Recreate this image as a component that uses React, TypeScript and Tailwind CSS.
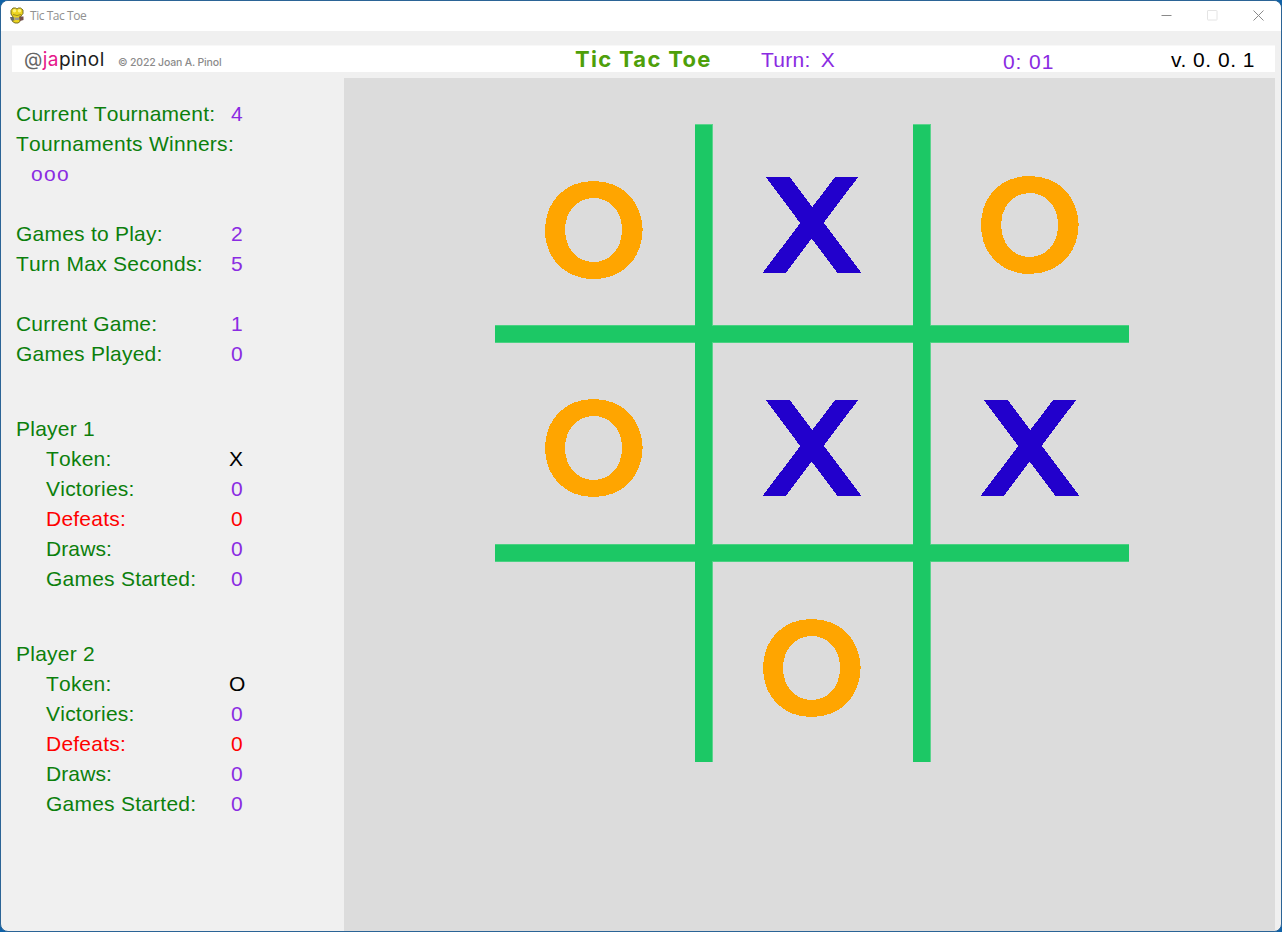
import React from "react";

type Tone = "green" | "red";
type Stat = { label: string; value?: string; tone?: Tone; valueClass?: string; labelClass?: string };

const PURPLE = "text-[#8a2be2]";

function PythonIcon() {
  return (
    <svg width="16" height="17" viewBox="0 0 16 17">
      <path d="M2 3.500 4 1h2.500l1.500 1 1.500-1h2L14 3v3.500L12 9l-1 1.500v4L9 16H6l-2.500-1.500.500-4.500L2 7z" fill="#ecd41f" stroke="#6b6218" strokeWidth="0.900" />
      <circle cx="5.500" cy="3.800" r="1.700" fill="#fff27a" />
      <circle cx="10.500" cy="3.800" r="1.700" fill="#fff27a" />
      <path d="M4 7.500q4 2 8 0" fill="none" stroke="#8a7c18" strokeWidth="0.800" />
      <path d="M1 10h3.500l1 3.500H2z" fill="#666a6e" />
      <path d="M5 10.500h5v2.500H6z" fill="#9b9b90" />
      <path d="M10 9.500h4.500v3.500L11 14z" fill="#75504c" />
    </svg>
  );
}

function WindowBar() {
  return (
    <div className="flex h-[30px] shrink-0 items-center bg-white pb-px pl-2">
      <PythonIcon />
      <span className="ml-[5px] pt-px font-['Open_Sans','Noto_Sans',sans-serif] text-[12px] leading-none tracking-[-0.450px] text-[#919191]">Tic Tac Toe</span>
      <div className="ml-auto flex h-full items-center gap-[35px] pr-[17px]">
        <svg width="11" height="11" viewBox="0 0 11 11"><path d="M.5 5.500h10" stroke="#8a8a8a" /></svg>
        <svg width="11" height="11" viewBox="0 0 11 11"><rect x=".5" y=".5" width="9.500" height="9.500" rx=".5" fill="none" stroke="#e4e4e4" /></svg>
        <svg width="11" height="11" viewBox="0 0 11 11"><path d="m.5.5 10 10m0-10-10 10" stroke="#8a8a8a" /></svg>
      </div>
    </div>
  );
}

function Header() {
  return (
    <header className="ml-[11px] mr-[6px] mt-[14px] flex h-[27px] shrink-0 items-center border-t border-[#f8f8f8] bg-white text-[21px] leading-[27px]">
      <div className="w-[94px] pl-[12px] pt-px font-['Inter',sans-serif] text-[19px] tracking-[0.450px] text-[#1c1c1c]">
        <span className="text-[#666]">@</span><span className="text-[#e6168a]">ja</span>pinol
      </div>
      <div className="w-[469px] pl-[12px] pt-[6px] font-['Inter',sans-serif] text-[10.500px] font-medium tracking-[-0.180px] text-[#8b8b8b]">© 2022 Joan A. Pinol</div>
      <h1 className="w-[186px] whitespace-nowrap font-['Inter',sans-serif] text-[22px] font-bold tracking-[1.300px] text-[#4e9f0a]">Tic Tac Toe</h1>
      <div className={`w-[242px] whitespace-pre tracking-[0.300px] ${PURPLE}`}>Turn:<span className="ml-[10px]">X</span></div>
      <div className={`w-[168px] pt-[5px] tracking-[0.900px] ${PURPLE}`}>0: 01</div>
      <div className="whitespace-nowrap tracking-[0.500px] text-black">v. 0. 0. 1</div>
    </header>
  );
}

function StatRow({ label, value, tone = "green", valueClass = PURPLE, labelClass = "" }: Stat) {
  return (
    <div className="flex h-[30px] items-center">
      <span className={`w-[215px] whitespace-nowrap ${tone === "red" ? "text-[#ff0000]" : "text-[#0c7f0c]"} ${labelClass}`}>{label}</span>
      <span className={valueClass}>{value}</span>
    </div>
  );
}

function Player({ name, token }: { name: string; token: string }) {
  return (
    <section className="mt-[45px]">
      <StatRow label={name} />
      <StatRow label="Token:" value={token} valueClass="-ml-[2px] text-black" labelClass="pl-[30px]" />
      <StatRow label="Victories:" value="0" labelClass="pl-[30px]" />
      <StatRow label="Defeats:" value="0" tone="red" valueClass="text-[#ff0000]" labelClass="pl-[30px]" />
      <StatRow label="Draws:" value="0" labelClass="pl-[30px] tracking-[0.100px]" />
      <StatRow label="Games Started:" value="0" labelClass="pl-[30px]" />
    </section>
  );
}

function Sidebar() {
  return (
    <aside className="w-[343px] shrink-0 pl-[15px] pt-[21px] text-[21px] leading-[30px] tracking-[0.230px] [font-kerning:none]">
      <StatRow label="Current Tournament:" value="4" />
      <StatRow label="Tournaments Winners:" labelClass="tracking-[0.280px]" />
      <div className={`h-[30px] pl-[15px] tracking-[1.300px] ${PURPLE}`}>ooo</div>
      <div className="mt-[30px]">
        <StatRow label="Games to Play:" value="2" />
        <StatRow label="Turn Max Seconds:" value="5" labelClass="tracking-[0.280px]" />
      </div>
      <div className="mt-[30px]">
        <StatRow label="Current Game:" value="1" labelClass="tracking-[0.180px]" />
        <StatRow label="Games Played:" value="0" />
      </div>
      <Player name="Player 1" token="X" />
      <Player name="Player 2" token="O" />
    </aside>
  );
}

function Cross() {
  return (
    <svg width="98" height="96" viewBox="0 0 98 96" shapeRendering="crispEdges" role="img" aria-label="X">
      <g stroke="#2200cc">
        <line x1="7.600" y1="-9.600" x2="93.600" y2="105.600" strokeWidth="19.200" />
        <line x1="90.850" y1="-9.600" x2="3.850" y2="105.600" strokeWidth="18.500" />
      </g>
    </svg>
  );
}

function Nought() {
  return (
    <svg width="98" height="98" viewBox="0 0 98 98" shapeRendering="crispEdges" role="img" aria-label="O">
      <path
        fill="#ffa500"
        fillRule="evenodd"
        d="M48.700 0C77.300 0 97.400 20.300 97.400 49S77.300 98 48.700 98 0 77.700 0 49 20.100 0 48.700 0Zm0 17C32 17 20 30.500 20 49s12 32 28.700 32S77 67.500 77 49 65.400 17 48.700 17Z"
      />
      <rect x="97" y="47" width="1" height="3" fill="#ffa500" />
    </svg>
  );
}

const GREEN = "bg-[#1cc865]";
const ROW_BAR = `${GREEN} border-y border-[#4ad182]`;
const COLUMN_BAR = `${GREEN} border-r border-t border-[#5bd48d]`;

function Board() {
  return (
    <div className="ml-[151px] mt-[46px] grid h-[638px] w-[634px] grid-cols-[200px_18px_200px_18px_198px] grid-rows-[201px_18px_201px_18px_200px]">
      <div className={`col-start-2 row-span-5 row-start-1 ${COLUMN_BAR}`} />
      <div className={`col-start-4 row-span-5 row-start-1 ${COLUMN_BAR}`} />
      <div className={`col-span-5 col-start-1 row-start-2 ${ROW_BAR}`} />
      <div className={`col-span-5 col-start-1 row-start-4 ${ROW_BAR}`} />
      <div className={`col-start-2 row-start-2 mr-px ${GREEN}`} />
      <div className={`col-start-4 row-start-2 mr-px ${GREEN}`} />
      <div className={`col-start-2 row-start-4 mr-px ${GREEN}`} />
      <div className={`col-start-4 row-start-4 mr-px ${GREEN}`} />
      <div className="col-start-1 row-start-1 pl-[50px] pt-[57px]"><Nought /></div>
      <div className="col-start-3 row-start-1 pl-[50px] pt-[53px]"><Cross /></div>
      <div className="col-start-5 row-start-1 pl-[50px] pt-[52px]"><Nought /></div>
      <div className="col-start-1 row-start-3 pl-[50px] pt-[56px]"><Nought /></div>
      <div className="col-start-3 row-start-3 pl-[50px] pt-[57px]"><Cross /></div>
      <div className="col-start-5 row-start-3 pl-[50px] pt-[57px]"><Cross /></div>
      <div className="col-start-3 row-start-5 pl-[50px] pt-[57px]"><Nought /></div>
    </div>
  );
}

export default function App() {
  return (
    <div className="h-[932px] w-[1282px] overflow-hidden bg-[#0f62a8] font-['Liberation_Sans',Arial,sans-serif]">
      <div className="flex h-full flex-col overflow-hidden rounded-[8px] border border-[#2b6496] bg-[#f0f0f0]">
        <WindowBar />
        <Header />
        <main className="mt-[6px] flex min-h-0 flex-1">
          <Sidebar />
          <div className="mr-[6px] flex-1 bg-[#dcdcdc]"><Board /></div>
        </main>
      </div>
    </div>
  );
}
